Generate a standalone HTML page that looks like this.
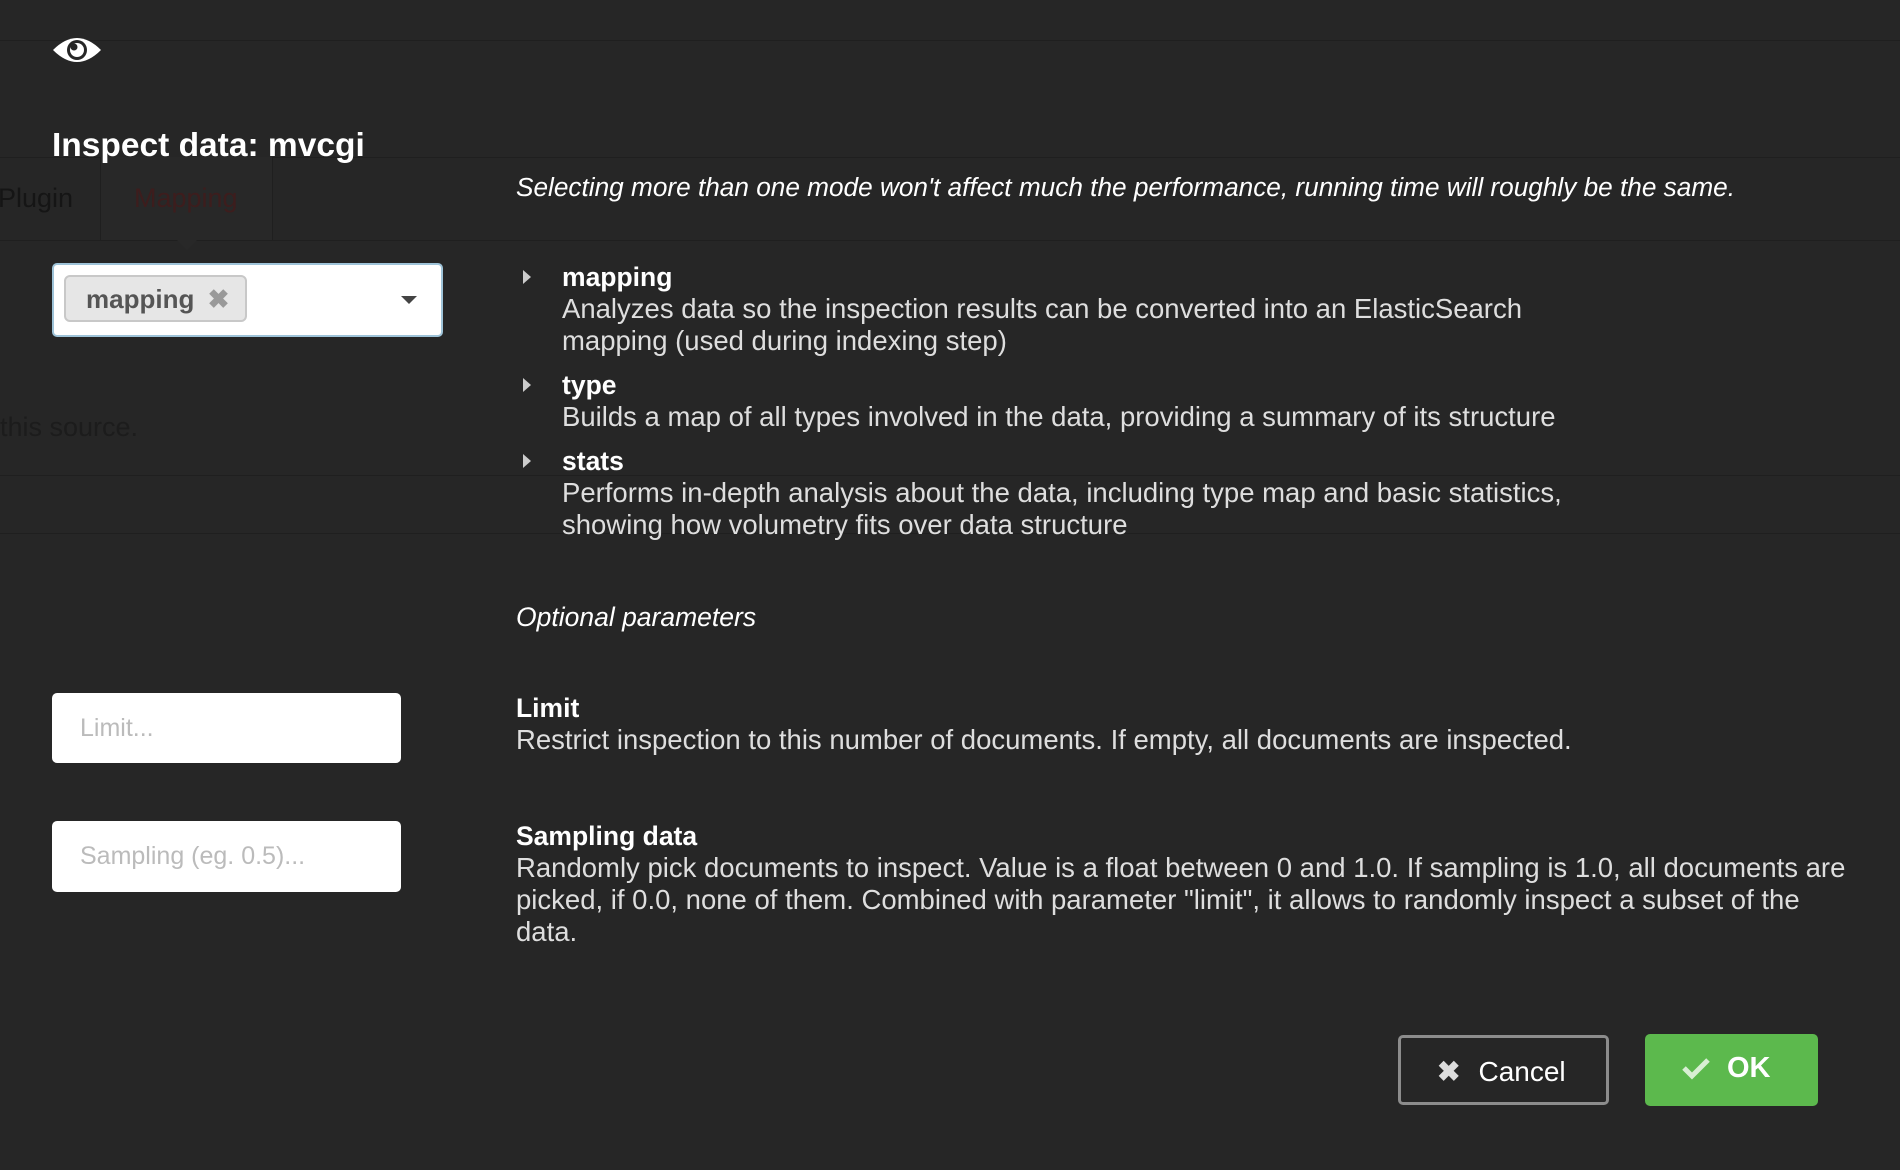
<!DOCTYPE html>
<html><head><meta charset="utf-8"><style>
*{margin:0;padding:0;box-sizing:border-box}
body{width:1900px;height:1170px;background:#262626;font-family:"Liberation Sans",sans-serif;color:#dedede;position:relative;overflow:hidden}
.a{position:absolute;white-space:nowrap}
.hl{position:absolute;left:0;width:1900px;height:1px;background:#1f1f1f}
.t{font-size:27.5px;line-height:32px}
b{color:#fff;font-size:26.5px}
</style></head><body>
<div class="hl" style="top:40px"></div>
<div class="hl" style="top:157px"></div>
<div class="hl" style="top:240px"></div>
<div class="hl" style="top:475px"></div>
<div class="hl" style="top:533px"></div>
<div class="a" style="left:100px;top:157px;width:173px;height:83px;background:#282828;border-left:1px solid #1f1f1f;border-right:1px solid #1f1f1f"></div>
<div class="a" style="left:177px;top:240px;width:0;height:0;border-left:10px solid transparent;border-right:10px solid transparent;border-top:10px solid #282828"></div>
<svg class="a" style="left:52px;top:34px" width="50" height="32" viewBox="0 0 50 32"><path d="M1 16 Q25 -8 49 16 Q25 40 1 16Z" fill="#fff"/><circle cx="25" cy="16" r="10" fill="#262626"/><circle cx="25" cy="16" r="7" fill="#fff"/><circle cx="22" cy="13" r="3.5" fill="#262626"/></svg>
<div class="a" style="left:52px;top:127px;font-size:33.5px;font-weight:bold;color:#fff">Inspect data: mvcgi</div>
<div class="a" style="left:-2px;top:183px;font-size:27px;color:#151515">Plugin</div>
<div class="a" style="left:134px;top:183px;font-size:27px;color:#3d1d1d">Mapping</div>
<div class="a" style="left:0;top:412px;font-size:27px;color:#1c1c1c">this source.</div>
<div class="a" style="left:52px;top:263px;width:391px;height:74px;background:#fff;border:2px solid #9ec3d8;border-radius:5px"></div>
<div class="a" style="left:64px;top:275px;width:183px;height:47px;background:#e6e6e6;border:2px solid #c8c8c8;border-radius:6px;font-size:26px;font-weight:bold;color:#555;padding:7px 0 0 20px">mapping <span style="color:#999;margin-left:6px">✖</span></div>
<div class="a" style="left:401px;top:296px;border-left:8px solid transparent;border-right:8px solid transparent;border-top:8px solid #444"></div>
<div class="a" style="left:516px;top:172px;font-size:26.2px;font-style:italic;color:#fff">Selecting more than one mode won't affect much the performance, running time will roughly be the same.</div>
<div class="a" style="left:523px;top:270px;border-top:7px solid transparent;border-bottom:7px solid transparent;border-left:8px solid #ccc"></div>
<div class="a" style="left:523px;top:378px;border-top:7px solid transparent;border-bottom:7px solid transparent;border-left:8px solid #ccc"></div>
<div class="a" style="left:523px;top:454px;border-top:7px solid transparent;border-bottom:7px solid transparent;border-left:8px solid #ccc"></div>
<div class="a t" style="left:562px;top:261px"><b>mapping</b><br>Analyzes data so the inspection results can be converted into an ElasticSearch<br>mapping (used during indexing step)</div>
<div class="a t" style="left:562px;top:369px"><b>type</b><br>Builds a map of all types involved in the data, providing a summary of its structure</div>
<div class="a t" style="left:562px;top:445px"><b>stats</b><br>Performs in-depth analysis about the data, including type map and basic statistics,<br>showing how volumetry fits over data structure</div>
<div class="a" style="left:516px;top:602px;font-size:26.5px;font-style:italic;color:#fff">Optional parameters</div>
<div class="a" style="left:52px;top:693px;width:349px;height:70px;background:#fff;border-radius:5px;font-size:25px;color:#bbb;padding:21px 0 0 28px">Limit...</div>
<div class="a" style="left:52px;top:821px;width:349px;height:71px;background:#fff;border-radius:5px;font-size:25px;color:#bbb;padding:21px 0 0 28px">Sampling (eg. 0.5)...</div>
<div class="a t" style="left:516px;top:692px"><b>Limit</b><br>Restrict inspection to this number of documents. If empty, all documents are inspected.</div>
<div class="a t" style="left:516px;top:820px"><b>Sampling data</b><br>Randomly pick documents to inspect. Value is a float between 0 and 1.0. If sampling is 1.0, all documents are<br>picked, if 0.0, none of them. Combined with parameter "limit", it allows to randomly inspect a subset of the<br>data.</div>
<div class="a" style="left:1398px;top:1035px;width:211px;height:70px;border:3px solid #8c8c8c;border-radius:5px;font-size:28px;color:#fff;padding:17px 0 0 36px"><span style="color:#ddd;font-weight:bold;margin-right:18px">✖</span>Cancel</div>
<div class="a" style="left:1645px;top:1034px;width:173px;height:72px;background:#5cb94d;border-radius:5px;font-size:29px;font-weight:bold;color:#fff;padding:18px 0 0 36px"><svg style="vertical-align:-3px;margin-right:16px" width="30" height="24" viewBox="0 0 30 24"><path d="M3 12 L11 20 L27 4" stroke="#d8efd3" stroke-width="5" fill="none"/></svg>OK</div>
</body></html>
